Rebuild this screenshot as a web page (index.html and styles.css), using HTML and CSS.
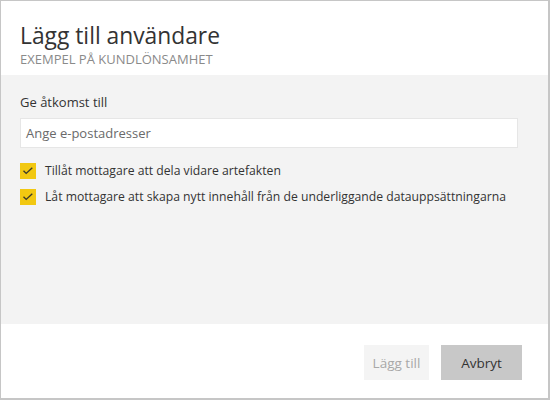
FILE: index.html
```html
<!DOCTYPE html>
<html lang="sv">
<head>
<meta charset="utf-8">
<link rel="stylesheet" href="styles.css">
</head>
<body>
<div class="dialog">
  <header class="header">
    <h1 class="title">Lägg till användare</h1>
    <div class="subtitle">EXEMPEL PÅ KUNDLÖNSAMHET</div>
  </header>
  <main class="content">
    <div class="label">Ge åtkomst till</div>
    <div class="input">Ange e-postadresser</div>
    <div class="options">
      <div class="option">
        <span class="box"><svg viewBox="0 0 16 16" width="16" height="16"><path d="M3.5 7.8 L6.2 10.4 L12.3 4.8" fill="none" stroke="#3a3a2a" stroke-width="1.4"/></svg></span>
        <span class="opt-text">Tillåt mottagare att dela vidare artefakten</span>
      </div>
      <div class="option">
        <span class="box"><svg viewBox="0 0 16 16" width="16" height="16"><path d="M3.5 7.8 L6.2 10.4 L12.3 4.8" fill="none" stroke="#3a3a2a" stroke-width="1.4"/></svg></span>
        <span class="opt-text">Låt mottagare att skapa nytt innehåll från de underliggande datauppsättningarna</span>
      </div>
    </div>
  </main>
  <footer class="footer">
    <button class="btn btn-disabled">Lägg till</button>
    <button class="btn btn-cancel">Avbryt</button>
  </footer>
</div>
</body>
</html>
```
FILE: styles.css
```css
html, body {
  margin: 0;
  padding: 0;
}
body {
  width: 550px;
  height: 400px;
  font-family: "Open Sans", "Noto Sans", sans-serif;
  color: #333;
}
.dialog {
  box-sizing: border-box;
  width: 550px;
  height: 400px;
  border: 1px solid #c6c6c6;
  border-right-width: 2px;
  border-bottom-width: 2px;
  display: flex;
  flex-direction: column;
  background: #fff;
}
.header {
  height: 74px;
  box-sizing: border-box;
  padding: 21px 19px 0;
}
.title {
  margin: 0;
  font-weight: 400;
  font-size: 22.8px;
  line-height: 28px;
  color: #333;
}
.subtitle {
  font-size: 13px;
  line-height: 16px;
  color: #8a8a8a;
  margin-top: 1px;
}
.content {
  background: #f3f3f3;
  height: 249px;
  box-sizing: border-box;
  padding: 18px 30px 0 19px;
}
.label {
  font-size: 13px;
  line-height: 18px;
  color: #333;
}
.input {
  margin-top: 7px;
  height: 30px;
  box-sizing: border-box;
  background: #fff;
  border: 1px solid #e6e6e6;
  font-size: 13px;
  line-height: 28px;
  padding-left: 5px;
  color: #6a6a6a;
}
.options {
  margin-top: 14px;
  display: flex;
  flex-direction: column;
  gap: 9px;
}
.option {
  display: flex;
  align-items: center;
  gap: 9px;
}
.box {
  width: 16px;
  height: 16px;
  background: #f2c811;
  display: block;
  flex: none;
}
.box svg {
  display: block;
}
.opt-text {
  font-size: 12.2px;
  line-height: 17px;
  color: #333;
}
.footer {
  flex: 1;
  display: flex;
  justify-content: flex-end;
  align-items: flex-start;
  padding: 21px 26px 0 0;
  gap: 12px;
}
.btn {
  font-family: inherit;
  border: none;
  height: 35px;
  font-size: 13.5px;
  padding: 0;
}
.btn-disabled {
  width: 65px;
  background: #f4f4f4;
  color: #a8a8a8;
}
.btn-cancel {
  width: 81px;
  background: #c8c8c8;
  color: #333;
}
```
